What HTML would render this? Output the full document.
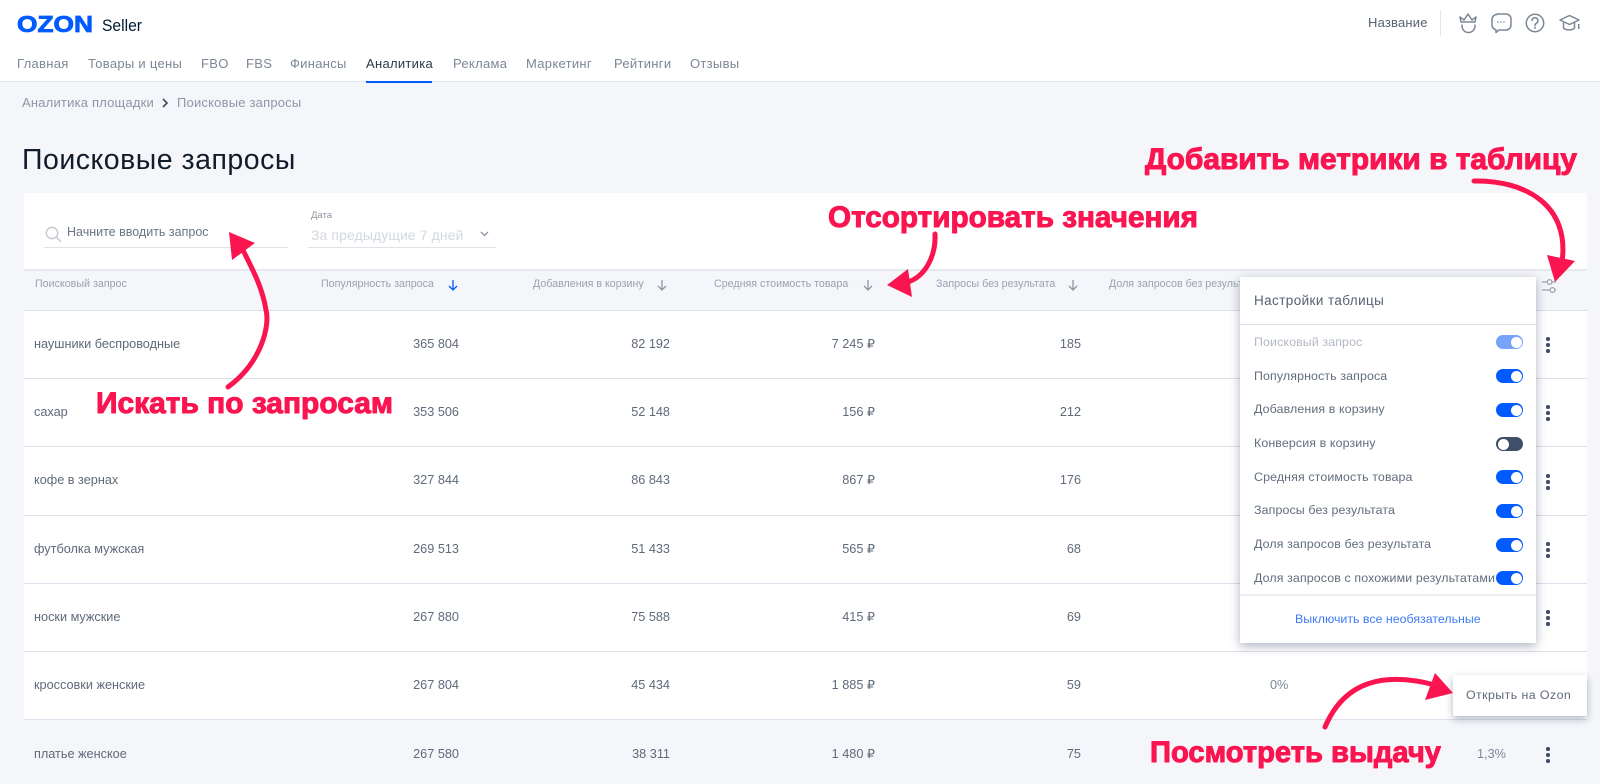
<!DOCTYPE html>
<html lang="ru"><head><meta charset="utf-8"><title>Поисковые запросы</title>
<style>
*{box-sizing:border-box}
html,body{margin:0;padding:0}
body{width:1600px;height:784px;overflow:hidden;background:#f5f6fa;position:relative;font-family:"Liberation Sans","DejaVu Sans",sans-serif;color:#5a6577}
.a{position:absolute;white-space:nowrap}
header{position:absolute;left:0;top:0;width:1600px;height:82px;background:#fff;border-bottom:1px solid #e3e6ef}
.nav{top:56px;font-size:13px;line-height:16px;letter-spacing:.3px;color:#7d8796}
.panel{position:absolute;left:24px;top:193px;width:1563px;height:526px;background:#fff}
.hrow{position:absolute;left:24px;top:269px;width:1563px;height:42px;background:#f5f6fa;border-top:2px solid #e6e8f0;border-bottom:1px solid #dcdfe9}
.line{position:absolute;left:24px;width:1563px;height:1px;background:#dcdfe9}
.h{top:278px;font-size:10.7px;line-height:13px;color:#9aa2b0}
.t{font-size:12.7px;line-height:16px;color:#5f6a7a}
.n{font-size:12.7px;line-height:16px;color:#5f6a7a;text-align:right;width:90px}
.dots{position:absolute;left:1546px;width:4px;height:16px}
.dots i{display:block;width:3.6px;height:3.6px;border-radius:50%;background:#3f4d69;margin-bottom:2.6px}
.pop{position:absolute;left:1240px;top:277px;width:296px;height:366px;background:#fff;box-shadow:0 3px 10px rgba(60,72,105,.42)}
.pi{position:absolute;left:14px;font-size:12.4px;line-height:16px;letter-spacing:.12px;color:#626d7e;white-space:nowrap}
.sw{position:absolute;left:256px;width:27px;height:14px;border-radius:7px;background:#005bff}
.sw:after{content:"";position:absolute;right:1.5px;top:1.5px;width:11px;height:11px;border-radius:50%;background:#fff}
.sw.off{background:#414e69}.sw.off:after{right:auto;left:1.5px}
.sw.dis{background:#77a3fb}
.tip{position:absolute;left:1453px;top:675px;width:134px;height:41px;background:#fff;border-radius:2px;box-shadow:0 3px 8px rgba(60,72,105,.4);font-size:12.4px;line-height:41px;padding-left:13px;letter-spacing:.42px;color:#5f6a7a;white-space:nowrap}
svg{position:absolute;left:0;top:0}
</style></head><body>

<header></header>
<svg width="1600" height="82" viewBox="0 0 1600 82" style="z-index:2">
<text x="17" y="32" font-family="Liberation Sans" font-weight="700" font-size="23" fill="#005bff" stroke="#005bff" stroke-width=".8" textLength="76" lengthAdjust="spacingAndGlyphs">OZON</text>
<text x="102" y="31" font-family="Liberation Sans" font-size="16.5" fill="#001a34" textLength="40" lengthAdjust="spacingAndGlyphs">Seller</text>
<g fill="none" stroke="#7c8796" stroke-width="1.5" stroke-linecap="round" stroke-linejoin="round">
<path d="M1460 17l4 3 4-6 4 6 4-3-1 5h-14z"/><path d="M1462 25v1a6.500 6.500 0 0 0 13 0v-1"/>
<path d="M1497 14h9a5 5 0 0 1 5 5v6a5 5 0 0 1-5 5h-7l-3 2.500v-2.800a5 5 0 0 1-4-4.200v-6a5 5 0 0 1 5-5z"/>
<circle cx="1535" cy="23" r="8.700"/><path d="M1532 20.500a3 3 0 1 1 4.500 2.700c-1 .6-1.500 1.200-1.500 2.300"/>
<path d="M1560 20l9.500-4.500 9.500 4.500-9.500 4.500z"/><path d="M1563.500 23v5c2 2.500 9 2.500 11 0v-5"/>
</g>
<g fill="#7c8796"><circle cx="1498" cy="22" r=".8"/><circle cx="1501" cy="22" r=".8"/><circle cx="1504" cy="22" r=".8"/><circle cx="1535" cy="27.800" r="1"/><rect x="1578" y="24" width="1.500" height="5"/></g>
</svg>
<div class="a" style="left:1440px;top:10px;width:1px;height:26px;background:#e3e6ef;z-index:2"></div>
<div class="a" style="left:1368px;top:15px;font-size:13px;line-height:16px;letter-spacing:.2px;color:#566172;z-index:2">Название</div>

<div class="a nav" style="left:17px">Главная</div>
<div class="a nav" style="left:88px">Товары и цены</div>
<div class="a nav" style="left:201px">FBO</div>
<div class="a nav" style="left:246px">FBS</div>
<div class="a nav" style="left:290px">Финансы</div>
<div class="a nav" style="left:366px;color:#2c3a4d">Аналитика</div>
<div class="a" style="left:366px;top:81px;width:66px;height:1.500px;background:#005bff"></div>
<div class="a nav" style="left:453px">Реклама</div>
<div class="a nav" style="left:526px">Маркетинг</div>
<div class="a nav" style="left:614px">Рейтинги</div>
<div class="a nav" style="left:690px">Отзывы</div>

<div class="a" style="left:22px;top:95px;font-size:13px;line-height:16px;letter-spacing:.2px;color:#8e97a5">Аналитика площадки</div>
<svg width="1600" height="120" viewBox="0 0 1600 120"><path d="M163 99l4 4-4 4" fill="none" stroke="#3f4d63" stroke-width="1.600"/></svg>
<div class="a" style="left:177px;top:95px;font-size:13px;line-height:16px;letter-spacing:.2px;color:#8e97a5">Поисковые запросы</div>

<div class="a" style="left:22px;top:143px;font-size:28.500px;line-height:34px;letter-spacing:.5px;color:#111c2b">Поисковые запросы</div>

<div class="panel"></div>
<svg width="1600" height="260" viewBox="0 0 1600 260" style="z-index:1">
<circle cx="52" cy="233" r="5.700" fill="none" stroke="#c3c8d2" stroke-width="1.400"/><path d="M56 237l5 5" stroke="#c3c8d2" stroke-width="1.400"/>
<path d="M481 232l3.500 3.500 3.500-3.500" fill="none" stroke="#8a93a1" stroke-width="1.300"/>
</svg>
<div class="a" style="left:67px;top:224px;font-size:12.500px;line-height:16px;color:#6a7484;z-index:1">Начните вводить запрос</div>
<div class="a" style="left:44px;top:247px;width:244px;height:1px;background:#dfe2ea;z-index:1"></div>
<div class="a" style="left:311px;top:210px;font-size:9.500px;line-height:12px;color:#8e97a5;z-index:1">Дата</div>
<div class="a" style="left:311px;top:226px;font-size:14px;line-height:18px;letter-spacing:.1px;color:#d3d7df;z-index:1">За предыдущие 7 дней</div>
<div class="a" style="left:308px;top:247px;width:188px;height:1px;background:#dfe2ea;z-index:1"></div>

<div class="hrow"></div>
<div class="a h" style="left:35px">Поисковый запрос</div>
<div class="a h" style="left:321px">Популярность запроса</div>
<div class="a h" style="left:533px">Добавления в корзину</div>
<div class="a h" style="left:714px">Средняя стоимость товара</div>
<div class="a h" style="left:936px">Запросы без результата</div>
<div class="a h" style="left:1109px">Доля запросов без результата</div>
<svg width="1600" height="320" viewBox="0 0 1600 320" style="z-index:1" fill="none" stroke-width="1.300">
<path d="M453 280v10M449 286l4 4 4-4" stroke="#005bff"/>
<path d="M662 280v10M658 286l4 4 4-4" stroke="#8d96a4"/>
<path d="M868 280v10M864 286l4 4 4-4" stroke="#8d96a4"/>
<path d="M1073 280v10M1069 286l4 4 4-4" stroke="#8d96a4"/>
<g stroke="#9aa2b0"><path d="M1542 282h5M1552 282h4M1542 290h8M1555 290h1"/><circle cx="1549.500" cy="282" r="2.400"/><circle cx="1552.500" cy="290" r="2.400"/></g>
</svg>

<div class="line" style="top:378px"></div>
<div class="line" style="top:446px"></div>
<div class="line" style="top:515px"></div>
<div class="line" style="top:583px"></div>
<div class="line" style="top:651px"></div>
<div class="line" style="top:719px"></div>

<div class="a t" style="left:34px;top:336px">наушники беспроводные</div>
<div class="a n" style="left:369px;top:336px">365 804</div><div class="a n" style="left:580px;top:336px">82 192</div><div class="a n" style="left:785px;top:336px">7 245 ₽</div><div class="a n" style="left:991px;top:336px">185</div>
<div class="a t" style="left:34px;top:404px">сахар</div>
<div class="a n" style="left:369px;top:404px">353 506</div><div class="a n" style="left:580px;top:404px">52 148</div><div class="a n" style="left:785px;top:404px">156 ₽</div><div class="a n" style="left:991px;top:404px">212</div>
<div class="a t" style="left:34px;top:472px">кофе в зернах</div>
<div class="a n" style="left:369px;top:472px">327 844</div><div class="a n" style="left:580px;top:472px">86 843</div><div class="a n" style="left:785px;top:472px">867 ₽</div><div class="a n" style="left:991px;top:472px">176</div>
<div class="a t" style="left:34px;top:541px">футболка мужская</div>
<div class="a n" style="left:369px;top:541px">269 513</div><div class="a n" style="left:580px;top:541px">51 433</div><div class="a n" style="left:785px;top:541px">565 ₽</div><div class="a n" style="left:991px;top:541px">68</div>
<div class="a t" style="left:34px;top:609px">носки мужские</div>
<div class="a n" style="left:369px;top:609px">267 880</div><div class="a n" style="left:580px;top:609px">75 588</div><div class="a n" style="left:785px;top:609px">415 ₽</div><div class="a n" style="left:991px;top:609px">69</div>
<div class="a t" style="left:34px;top:677px">кроссовки женские</div>
<div class="a n" style="left:369px;top:677px">267 804</div><div class="a n" style="left:580px;top:677px">45 434</div><div class="a n" style="left:785px;top:677px">1 885 ₽</div><div class="a n" style="left:991px;top:677px">59</div>
<div class="a t" style="left:1270px;top:677px;color:#7d8796">0%</div>
<div class="a t" style="left:34px;top:746px">платье женское</div>
<div class="a n" style="left:369px;top:746px">267 580</div><div class="a n" style="left:580px;top:746px">38 311</div><div class="a n" style="left:785px;top:746px">1 480 ₽</div><div class="a n" style="left:991px;top:746px">75</div>
<div class="a t" style="left:1477px;top:746px;color:#7d8796">1,3%</div>

<div class="dots" style="top:337px"><i></i><i></i><i></i></div>
<div class="dots" style="top:405px"><i></i><i></i><i></i></div>
<div class="dots" style="top:474px"><i></i><i></i><i></i></div>
<div class="dots" style="top:542px"><i></i><i></i><i></i></div>
<div class="dots" style="top:610px"><i></i><i></i><i></i></div>
<div class="dots" style="top:747px"><i></i><i></i><i></i></div>

<div class="pop">
<div class="a" style="left:14px;top:16px;font-size:13.500px;line-height:16px;letter-spacing:.4px;color:#566172">Настройки таблицы</div>
<div class="a" style="left:0;top:47px;width:296px;height:1px;background:#d9dde6"></div>
<div class="pi" style="top:57px;color:#b2b8c3">Поисковый запрос</div><div class="sw dis" style="top:58px"></div>
<div class="pi" style="top:91px">Популярность запроса</div><div class="sw" style="top:92px"></div>
<div class="pi" style="top:124px">Добавления в корзину</div><div class="sw" style="top:126px"></div>
<div class="pi" style="top:158px">Конверсия в корзину</div><div class="sw off" style="top:160px"></div>
<div class="pi" style="top:192px">Средняя стоимость товара</div><div class="sw" style="top:193px"></div>
<div class="pi" style="top:225px">Запросы без результата</div><div class="sw" style="top:227px"></div>
<div class="pi" style="top:259px">Доля запросов без результата</div><div class="sw" style="top:261px"></div>
<div class="pi" style="top:293px">Доля запросов с похожими результатами</div><div class="sw" style="top:294px"></div>
<div class="a" style="left:0;top:317px;width:296px;height:2px;background:#eceef3"></div>
<div class="a" style="left:55px;top:334px;font-size:12.400px;line-height:16px;color:#3d7cf6">Выключить все необязательные</div>
</div>

<div class="tip">Открыть на Ozon</div>

<svg width="1600" height="784" viewBox="0 0 1600 784" style="z-index:5">
<g font-family="Liberation Sans" font-weight="700" font-size="30" fill="#fa1450" stroke="#fa1450" stroke-width="1" stroke-linejoin="round">
<text x="1145" y="169" textLength="432" lengthAdjust="spacingAndGlyphs">Добавить метрики в таблицу</text>
<text x="828" y="227" textLength="370" lengthAdjust="spacingAndGlyphs">Отсортировать значения</text>
<text x="96" y="413" textLength="297" lengthAdjust="spacingAndGlyphs">Искать по запросам</text>
<text x="1150" y="762" textLength="291" lengthAdjust="spacingAndGlyphs">Посмотреть выдачу</text>
</g>
<g fill="none" stroke="#fa1450" stroke-width="5" stroke-linecap="round">
<path d="M1474 181C1525 180 1570 205 1562 262"/>
<path d="M935 234C936 255 926 276 908 282"/>
<path d="M228 387C262 362 270 325 266 310C262 285 250 265 243 250"/>
<path d="M1325 727C1345 680 1385 672 1435 685"/>
</g>
<g fill="#fa1450">
<path d="M1547 255L1575 261L1555 282Z"/>
<path d="M887 285L908 269L912 297Z"/>
<path d="M229 232L255 243L232 260Z"/>
<path d="M1435 673L1453 693L1425 700Z"/>
</g>
</svg>
</body></html>
